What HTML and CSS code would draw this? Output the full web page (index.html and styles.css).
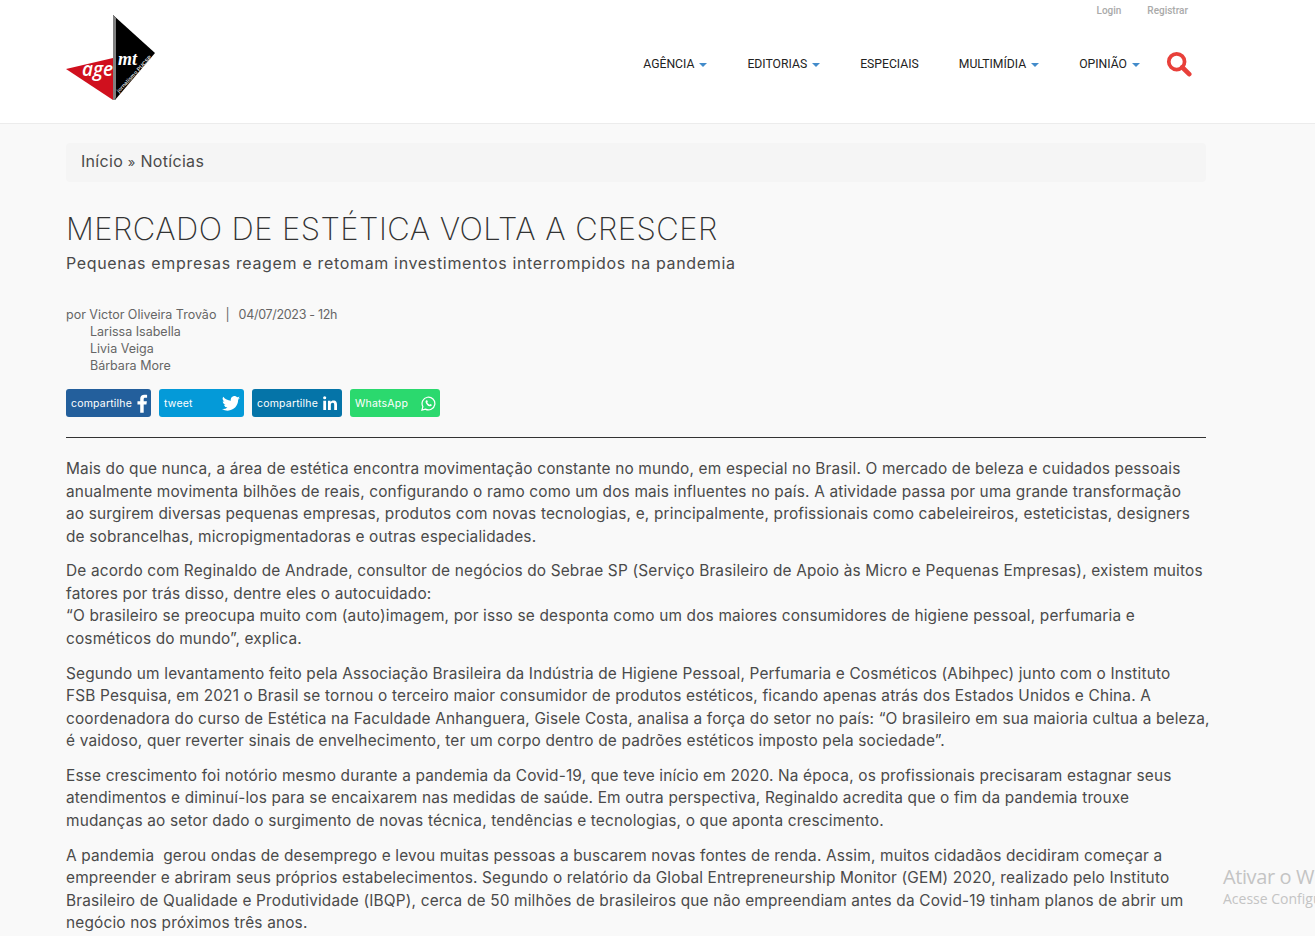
FILE: index.html
```html
<!DOCTYPE html>
<html lang="pt-BR">
<head>
<meta charset="utf-8">
<title>Mercado de estética volta a crescer</title>
<link rel="stylesheet" href="styles.css">
</head>
<body>
<header class="site-header">
  <div class="header-inner">
    <a class="logo" href="#" aria-label="Agemt">
      <svg width="92" height="90" viewBox="0 0 92 90">
        <polygon points="0,55 47,44 47,86" fill="#d0101e"/>
        <polygon points="47,1 89,39 49,86" fill="#000"/>
        <polygon points="47,1 50,4 50,83 49,86 47,86" fill="#808080"/>
        <text x="16" y="62" class="logo-age">age</text>
        <text x="52" y="51" class="logo-mt">mt</text>
        <text x="53" y="79" class="logo-small" transform="rotate(-47 53 79)">jornalismo PUCSP</text>
      </svg>
    </a>
    <div class="header-right">
      <div class="top-links"><a href="#">Login</a><a href="#">Registrar</a></div>
      <nav class="main-nav">
        <a href="#">AGÊNCIA <span class="caret"></span></a>
        <a href="#">EDITORIAS <span class="caret"></span></a>
        <a href="#">ESPECIAIS</a>
        <a href="#">MULTIMÍDIA <span class="caret"></span></a>
        <a href="#">OPINIÃO <span class="caret"></span></a>
        <svg class="search" width="26" height="26" viewBox="0 0 28 28" aria-label="Buscar"><circle cx="11.5" cy="11.5" r="8.5" fill="none" stroke="#e8403a" stroke-width="4"/><path d="M17.5 17.5 L25 25" stroke="#e8403a" stroke-width="5" stroke-linecap="round"/></svg>
      </nav>
    </div>
  </div>
</header>
<main class="content">
  <div class="breadcrumb">Início <span class="crumb-sep">»</span> Notícias</div>
  <h1 class="title">MERCADO DE ESTÉTICA VOLTA A CRESCER</h1>
  <p class="subtitle">Pequenas empresas reagem e retomam investimentos interrompidos na pandemia</p>
  <div class="meta">
    <div>por Victor Oliveira Trovão<span class="sep">|</span><span class="date">04/07/2023 - 12h</span></div>
    <div class="author">Larissa Isabella</div>
    <div class="author">Livia Veiga</div>
    <div class="author">Bárbara More</div>
  </div>
  <div class="share">
    <a class="btn fb" href="#"><span>compartilhe</span><svg width="11" height="19" viewBox="0 0 12 20"><path d="M3.5 20V11H0.5V7.5H3.5V5C3.5 2 5.300 0.500 8 0.500C9.300 0.500 10.500 0.600 11 0.700V3.800H9.100C7.600 3.800 7.300 4.500 7.300 5.500V7.500H10.800L10.300 11H7.300V20Z" fill="#fff"/></svg></a>
    <a class="btn tw" href="#"><span>tweet</span><svg width="18" height="15" viewBox="0 0 24 20"><path d="M24 2.400a9.800 9.800 0 0 1-2.800.8A4.900 4.900 0 0 0 23.300.500a9.800 9.800 0 0 1-3.100 1.200 4.900 4.900 0 0 0-8.400 4.500A14 14 0 0 1 1.700.900a4.900 4.900 0 0 0 1.500 6.600 4.900 4.900 0 0 1-2.200-.6c0 2.400 1.700 4.400 3.900 4.900a4.900 4.900 0 0 1-2.200.1 4.900 4.900 0 0 0 4.600 3.400A9.900 9.900 0 0 1 0 17.300 14 14 0 0 0 7.500 19.500c9.100 0 14.300-7.700 14-14.600A10 10 0 0 0 24 2.400z" fill="#fff"/></svg></a>
    <a class="btn li" href="#"><span>compartilhe</span><svg width="14" height="14" viewBox="0 0 15 15"><path d="M0.300 5H3.300V15H0.300ZM1.800 0.200A1.700 1.700 0 1 1 1.800 3.600A1.700 1.700 0 0 1 1.800 0.200ZM5.300 5H8.100V6.400C8.600 5.500 9.700 4.800 11.200 4.800C14.300 4.800 15 6.800 15 9.500V15H12V10C12 8.800 12 7.300 10.400 7.300C8.700 7.300 8.400 8.600 8.400 10V15H5.300Z" fill="#fff"/></svg></a>
    <a class="btn wa" href="#"><span>WhatsApp</span><svg width="15" height="15" viewBox="0 0 16 16"><path d="M1 15L2 11.300A6.800 6.800 0 1 1 4.700 14Z" fill="none" stroke="#fff" stroke-width="1.300"/><path d="M5.600 4.500C5 5 4.700 5.800 5 6.800C5.500 8.500 7.500 10.600 9.300 11C10.200 11.200 11 10.800 11.400 10.200L11.500 9.400L9.900 8.600L9.200 9.400C8.200 9 7.100 8 6.700 7L7.300 6.200L6.600 4.500Z" fill="#fff"/></svg></a>
  </div>
  <hr class="rule">
  <article class="body-text">
    <p>Mais do que nunca, a área de estética encontra movimentação constante no mundo, em especial no Brasil. O mercado de beleza e cuidados pessoais<br>anualmente movimenta bilhões de reais, configurando o ramo como um dos mais influentes no país. A atividade passa por uma grande transformação<br>ao surgirem diversas pequenas empresas, produtos com novas tecnologias, e, principalmente, profissionais como cabeleireiros, esteticistas, designers<br>de sobrancelhas, micropigmentadoras e outras especialidades.</p>
    <p>De acordo com Reginaldo de Andrade, consultor de negócios do Sebrae SP (Serviço Brasileiro de Apoio às Micro e Pequenas Empresas), existem muitos<br>fatores por trás disso, dentre eles o autocuidado:<br>“O brasileiro se preocupa muito com (auto)imagem, por isso se desponta como um dos maiores consumidores de higiene pessoal, perfumaria e<br>cosméticos do mundo”, explica.</p>
    <p>Segundo um levantamento feito pela Associação Brasileira da Indústria de Higiene Pessoal, Perfumaria e Cosméticos (Abihpec) junto com o Instituto<br>FSB Pesquisa, em 2021 o Brasil se tornou o terceiro maior consumidor de produtos estéticos, ficando apenas atrás dos Estados Unidos e China. A<br>coordenadora do curso de Estética na Faculdade Anhanguera, Gisele Costa, analisa a força do setor no país: “O brasileiro em sua maioria cultua a beleza,<br>é vaidoso, quer reverter sinais de envelhecimento, ter um corpo dentro de padrões estéticos imposto pela sociedade”.</p>
    <p>Esse crescimento foi notório mesmo durante a pandemia da Covid-19, que teve início em 2020. Na época, os profissionais precisaram estagnar seus<br>atendimentos e diminuí-los para se encaixarem nas medidas de saúde. Em outra perspectiva, Reginaldo acredita que o fim da pandemia trouxe<br>mudanças ao setor dado o surgimento de novas técnica, tendências e tecnologias, o que aponta crescimento.</p>
    <p>A pandemia &nbsp;gerou ondas de desemprego e levou muitas pessoas a buscarem novas fontes de renda. Assim, muitos cidadãos decidiram começar a<br>empreender e abriram seus próprios estabelecimentos. Segundo o relatório da Global Entrepreneurship Monitor (GEM) 2020, realizado pelo Instituto<br>Brasileiro de Qualidade e Produtividade (IBQP), cerca de 50 milhões de brasileiros que não empreendiam antes da Covid-19 tinham planos de abrir um<br>negócio nos próximos três anos.</p>
  </article>
</main>
<div class="watermark"><div class="wm-big">Ativar o Windows</div><div class="wm-small">Acesse Configurações para ativar o Windows.</div></div>
</body>
</html>
```
FILE: styles.css
```css
html, body { margin: 0; padding: 0; height: 936px; overflow: hidden; }
body { background: #f9f9f9; font-family: "Open Sans", sans-serif; color: #333; position: relative; }
a { text-decoration: none; color: inherit; }
.site-header { background: #fff; height: 123px; border-bottom: 1px solid #ececec; }
.header-inner { display: flex; justify-content: space-between; padding: 0 123px 0 66px; height: 100%; }
.logo { display: block; padding-top: 14px; }
.logo-age { font: italic 600 19px "Open Sans", sans-serif; fill: #fff; }
.logo-mt { font: italic 700 18px "Liberation Serif", serif; fill: #fff; }
.logo-small { font: 700 5.500px "Liberation Sans", sans-serif; fill: #ddd; }
.header-right { display: flex; flex-direction: column; align-items: flex-end; }
.top-links { display: flex; gap: 26px; padding: 5px 4px 0 0; font: 500 10px/12px Roboto, sans-serif; color: #aaa; }
.main-nav { display: flex; align-items: center; gap: 40px; margin-top: 34px; font: 400 12.2px/16px Roboto, sans-serif; color: #222; }
.caret { display: inline-block; width: 0; height: 0; margin-left: 2px; vertical-align: middle; border-top: 4px solid #428bca; border-left: 4px solid transparent; border-right: 4px solid transparent; }
.search { margin-left: -14px; }
.content { padding: 19px 109px 0 66px; }
.breadcrumb { background: #f5f5f5; border-radius: 4px; height: 39px; padding-left: 15px; font: 400 16px/37px Inter, sans-serif; letter-spacing: .3px; color: #4a4a4a; }
.crumb-sep { font-size: 13px; }
.title { margin: 27px 0 0; font: 200 31px/40px Inter, sans-serif; letter-spacing: .43px; color: #333; }
.subtitle { margin: 3px 0 0; font: 400 16px/22px Inter, sans-serif; letter-spacing: .66px; color: #4a4a4a; }
.meta { margin-top: 32px; font: 400 12.500px/17px Inter, sans-serif; color: #666; }
.sep { margin: 0 9px; }
.date { letter-spacing: -.3px; }
.author { padding-left: 24px; }
.share { display: flex; gap: 8px; margin-top: 15px; }
.btn { width: 85px; height: 28px; box-sizing: border-box; border-radius: 3px; display: flex; align-items: center; justify-content: space-between; padding: 0 3px 0 5px; color: #fff; font: 400 10.500px/28px Inter, sans-serif; letter-spacing: .2px; }
.btn span { padding-top: 1px; }
.fb { background: #235f9c; }
.tw { background: #049ad8; padding-right: 4px; }
.li { background: #0574a8; width: 90px; padding-right: 5px; }
.wa { background: #2bd96e; width: 90px; padding-right: 4px; }
.rule { border: 0; border-top: 1px solid #333; margin: 20px 0 0; }
.body-text { margin-top: 20px; font: 400 15.400px/22.500px Inter, sans-serif; letter-spacing: .17px; color: #4a4a4a; white-space: nowrap; }
.body-text p { margin: 0 0 12.300px; }
.watermark { position: absolute; left: 1223px; top: 864px; white-space: nowrap; color: #c4c4c4; font-family: "Open Sans", sans-serif; }
.wm-big { font-size: 20px; line-height: 26px; letter-spacing: -.4px; }
.wm-small { font-size: 14px; line-height: 18px; }
```
